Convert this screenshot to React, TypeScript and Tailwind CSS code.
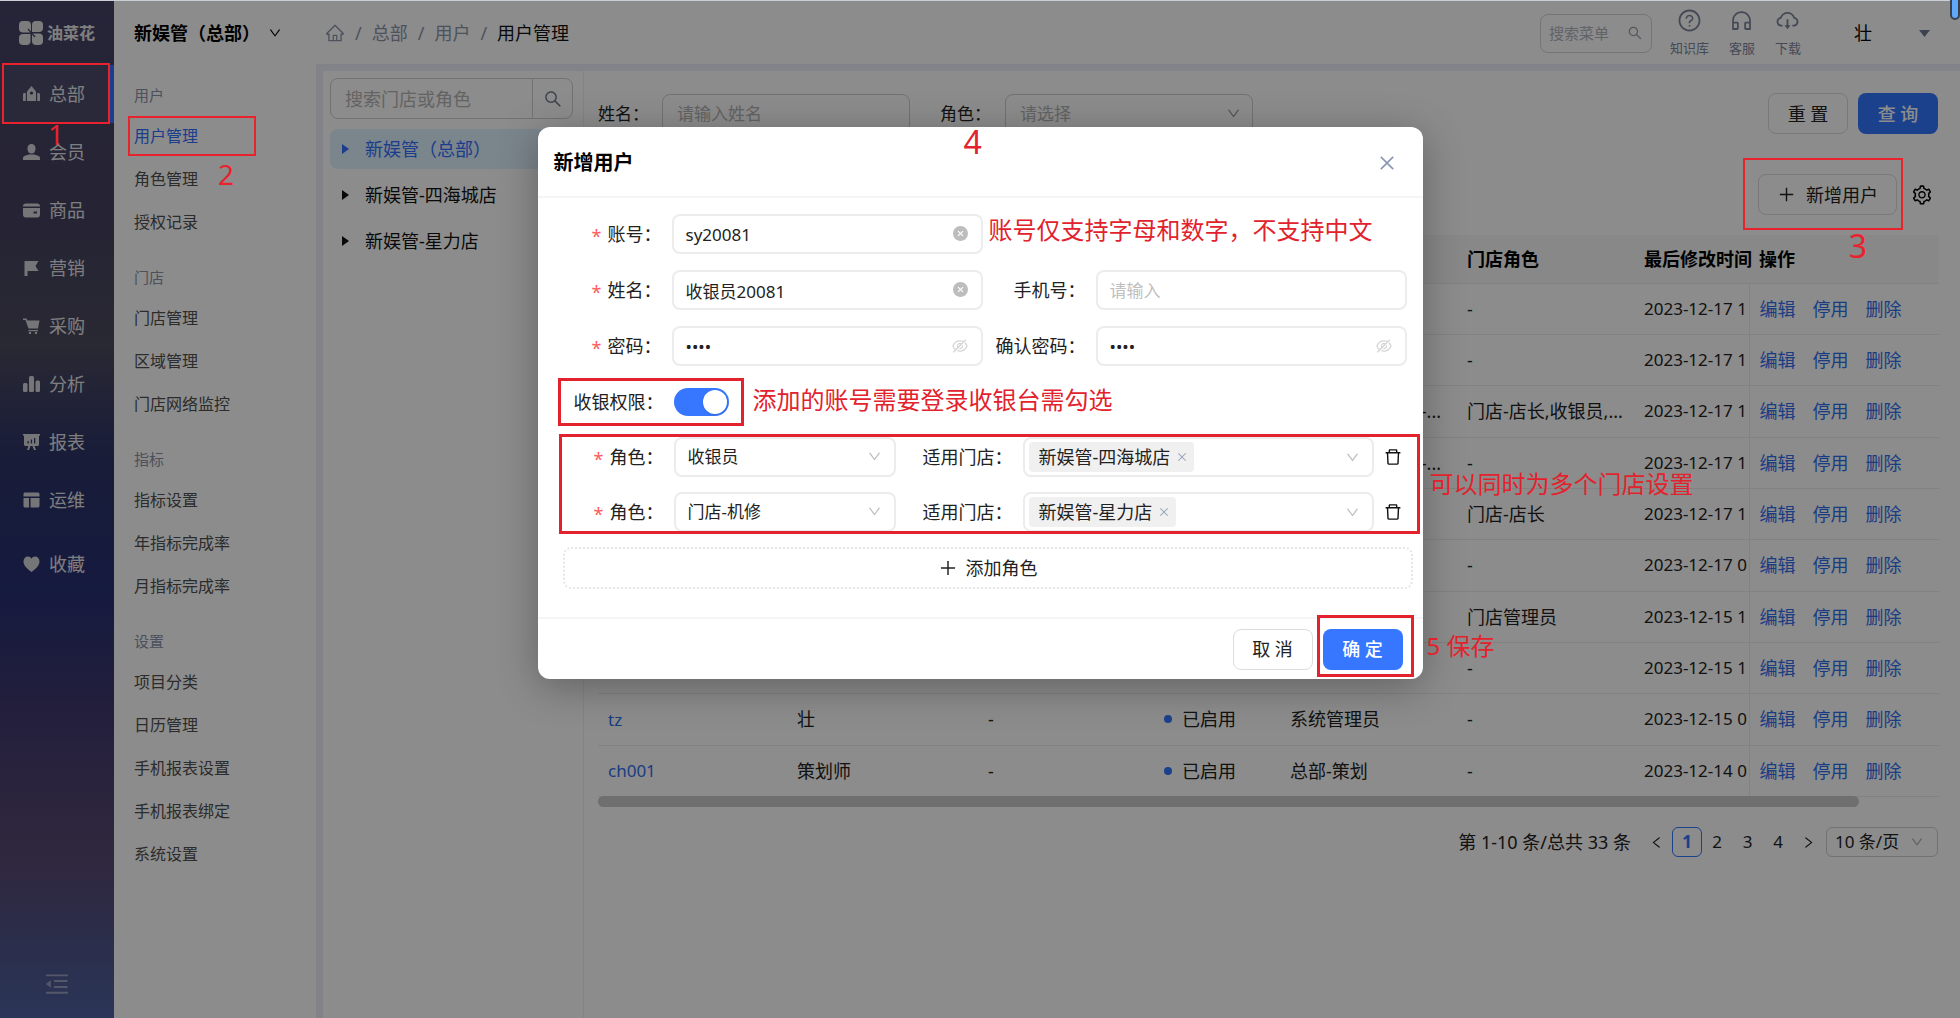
import { useState, type ReactNode } from "react";
import {
  AiFillCloseCircle,
  AiOutlineClose,
  AiOutlineCloudDownload,
  AiOutlineCustomerService,
  AiOutlineDelete,
  AiOutlineDown,
  AiOutlineEyeInvisible,
  AiOutlineHome,
  AiOutlineLeft,
  AiOutlineMenuFold,
  AiOutlinePlus,
  AiOutlineQuestionCircle,
  AiOutlineRight,
  AiOutlineSearch,
  AiOutlineSetting,
} from "react-icons/ai";

const navItems: { label: string; icon: ReactNode }[] = [
  {
    label: "总部",
    icon: (
      <>
        <path d="M4 15V5.500L8.500 0 13 5.500V15H4z" />
        <path d="M0 15V8.500C0 7.400 1 7 2.800 7v8H0zM14.200 15V7c1.800 0 2.800.4 2.800 1.500V15h-2.800z" />
        <circle cx="8.500" cy="7" r="1.600" fill="#3d3b5c" />
      </>
    ),
  },
  {
    label: "会员",
    icon: (
      <>
        <path d="M4.500 4.500C4.500 1.500 6 0 8.500 0s4 1.500 4 4.500-1.500 5-4 5-4-2-4-5z" />
        <path d="M0 16v-2c0-2 2-2.500 6-3.500h5c4 1 6 1.500 6 3.500v2H0z" />
      </>
    ),
  },
  {
    label: "商品",
    icon: (
      <>
        <path d="M0 4.500C0 2.500 1 1.500 3 1.500h11c2 0 3 1 3 3H0z" />
        <path fillRule="evenodd" d="M0 6h17v6.500c0 2-1 3-3 3H3c-2 0-3-1-3-3V6zm10.500 3.500v2H14v-2h-3.500z" />
      </>
    ),
  },
  { label: "营销", icon: <path d="M1.500 1h14l-3 5 3 5h-11v5h-3V1z" /> },
  {
    label: "采购",
    icon: (
      <>
        <path d="M0 .5h3.500L4.500 2.500H16.500L15 10.500H5.500L2.500 2H0V.5z" />
        <path d="M5.500 12H15v1.200H5.500z" />
        <circle cx="7" cy="15" r="1.200" />
        <circle cx="13" cy="15" r="1.200" />
      </>
    ),
  },
  {
    label: "分析",
    icon: (
      <>
        <rect x="0" y="7" width="4.500" height="9" rx="1.500" />
        <rect x="6" y="0" width="5" height="16" rx="1.500" />
        <rect x="12.500" y="4.500" width="4.500" height="11.500" rx="1.500" />
      </>
    ),
  },
  {
    label: "报表",
    icon: (
      <>
        <path d="M0 0h17v1.600H0z" />
        <path fillRule="evenodd" d="M1 1h15v9c0 1.500-.5 2-2 2H3c-1.500 0-2-.5-2-2V1zm3.500 6v2.500h1.300V7H4.500zm3.300-1.500v4h1.300v-4H7.800zM11 4v5.500h1.300V4H11z" />
        <path d="M5.500 12h2L6 16H4zM9.500 12h2l1.500 4h-2z" />
      </>
    ),
  },
  {
    label: "运维",
    icon: (
      <>
        <path d="M.5 4.500V2.500C.5 1 1 .5 2.500.5h12c1.500 0 2 .5 2 2v2H.5z" />
        <path d="M.5 6H6v9.500H2.500c-1.500 0-2-.5-2-2V6zM7.500 6h9v7.500c0 1.500-.5 2-2 2h-7V6z" />
      </>
    ),
  },
  {
    label: "收藏",
    icon: <path d="M8.500 16C4 12.500.5 9.500.5 5.500.5 2.500 2.500.500 4.800.500c1.600 0 3 .8 3.700 2.200C9.200 1.300 10.600.5 12.200.5c2.300 0 4.300 2 4.300 5 0 4-3.500 7-8 10.500z" />,
  },
];

const menuGroups = [
  { title: "用户", items: ["用户管理", "角色管理", "授权记录"] },
  { title: "门店", items: ["门店管理", "区域管理", "门店网络监控"] },
  { title: "指标", items: ["指标设置", "年指标完成率", "月指标完成率"] },
  { title: "设置", items: ["项目分类", "日历管理", "手机报表设置", "手机报表绑定", "系统设置"] },
];

const treeNodes = ["新娱管（总部）", "新娱管-四海城店", "新娱管-星力店"];

interface UserRow {
  account?: string;
  name?: string;
  phone?: string;
  enabled?: boolean;
  role?: string;
  storeRole: string;
  updatedAt: string;
}

const rows: UserRow[] = [
  { storeRole: "-", updatedAt: "2023-12-17 1" },
  { storeRole: "-", updatedAt: "2023-12-17 1" },
  { role: "系统管理员,总部-...", storeRole: "门店-店长,收银员,...", updatedAt: "2023-12-17 1" },
  { role: "系统管理员,总部-...", storeRole: "-", updatedAt: "2023-12-17 1" },
  { storeRole: "门店-店长", updatedAt: "2023-12-17 1" },
  { storeRole: "-", updatedAt: "2023-12-17 0" },
  { storeRole: "门店管理员", updatedAt: "2023-12-15 1" },
  { storeRole: "-", updatedAt: "2023-12-15 1" },
  { account: "tz", name: "壮", phone: "-", enabled: true, role: "系统管理员", storeRole: "-", updatedAt: "2023-12-15 0" },
  { account: "ch001", name: "策划师", phone: "-", enabled: true, role: "总部-策划", storeRole: "-", updatedAt: "2023-12-14 0" },
];

const columns = [
  { title: "账号", width: "w-[189px]" },
  { title: "姓名", width: "w-[191px]" },
  { title: "手机", width: "w-[176px]" },
  { title: "状态", width: "w-[126px]" },
  { title: "总部角色", width: "w-[177px]" },
  { title: "门店角色", width: "w-[177px]" },
  { title: "最后修改时间", width: "w-[115px]" },
  { title: "操作", width: "w-[190px]" },
];

const inputBox =
  "h-10 w-full rounded-lg border-2 border-[#ececec] bg-white px-3 text-[17px] text-[#222] outline-none placeholder:text-[#bfbfbf]";
const plainButton =
  "h-[41px] w-20 rounded-lg border border-[#dcdcdc] bg-white text-lg leading-6 text-[#222]";

function Sidebar() {
  return (
    <aside className="flex w-[114px] shrink-0 flex-col bg-[linear-gradient(180deg,#464467_0%,#44415f_20%,#4b4a5e_34%,#2d3468_45%,#273073_58%,#40396e_70%,#584870_84%,#4f5388_92%,#4f62a0_100%)]">
      <div className="flex h-[65px] items-center gap-1 pl-[19px]">
        <svg className="size-6 shrink-0" viewBox="0 0 24 24" fill="#e2e2e4">
          <path d="M4 0h4a4 4 0 014 4v7.500H4A4 4 0 010 8V4a4 4 0 014-4z" />
          <path d="M17 0h3a4 4 0 014 4v3a4 4 0 01-4 4h-7V4a4 4 0 014-4z" />
          <path d="M4 13h7.500v7a4 4 0 01-4 4H4a4 4 0 01-4-4v-3a4 4 0 014-4z" />
          <path d="M13 12.500h7a4 4 0 014 4V20a4 4 0 01-4 4h-3a4 4 0 01-4-4v-7.500z" />
          <path d="M9 8l7 8" stroke="#464467" strokeWidth="1.200" />
        </svg>
        <span className="text-base font-bold text-[#e8e8ea]">油菜花</span>
      </div>
      <nav className="flex flex-1 flex-col">
        {navItems.map((item, i) => (
          <a
            key={item.label}
            href="#"
            className={`flex h-[58px] shrink-0 items-center gap-[9px] pl-[23px] text-lg text-[#e6e6ea] last:mt-1.5 ${
              i === 0 ? "border-r-4 border-[#3370ff] bg-white/5" : ""
            }`}
          >
            <svg className="h-4 w-[17px]" viewBox="0 0 17 16" fill="#d8d8dc">
              {item.icon}
            </svg>
            {item.label}
          </a>
        ))}
      </nav>
      <button aria-label="收起菜单" className="mb-5 flex justify-center text-[#9a9fc0]">
        <AiOutlineMenuFold size={28} />
      </button>
    </aside>
  );
}

function SideMenu() {
  return (
    <nav className="w-[202px] shrink-0 bg-white pl-5">
      <button className="flex h-[62px] w-full items-center gap-2 pt-1 text-lg font-bold text-black">
        新娱管（总部）
        <AiOutlineDown size={14} />
      </button>
      {menuGroups.map((group) => (
        <div key={group.title}>
          <div className="h-[53px] pt-[13px] text-[15px] leading-10 text-[#8a93a8]">{group.title}</div>
          {group.items.map((item) => (
            <a
              key={item}
              href="#"
              className={`block h-[43px] text-base leading-[43px] ${item === "用户管理" ? "text-[#3370ff]" : "text-[#505050]"}`}
            >
              {item}
            </a>
          ))}
        </div>
      ))}
    </nav>
  );
}

function TopBar() {
  const tools = [
    { label: "知识库", icon: <AiOutlineQuestionCircle size={25} /> },
    { label: "客服", icon: <AiOutlineCustomerService size={25} /> },
    { label: "下载", icon: <AiOutlineCloudDownload size={25} /> },
  ];
  return (
    <header className="flex h-16 items-center bg-white pt-0.5 pr-[30px] pl-[9px]">
      <ol className="flex items-center gap-2.5 text-lg text-[#8d96aa]">
        <li>
          <AiOutlineHome size={20} />
        </li>
        <li>/</li>
        <li>总部</li>
        <li>/</li>
        <li>用户</li>
        <li>/</li>
        <li className="text-[#111]">用户管理</li>
      </ol>
      <label className="ml-auto flex h-[39px] w-28 items-center rounded-lg border border-[#d6d6d6] pr-2 pl-2">
        <input className="w-full min-w-0 text-[15px] outline-none placeholder:text-[#b0b4bd]" placeholder="搜索菜单" aria-label="搜索菜单" />
        <AiOutlineSearch size={16} className="shrink-0 text-[#9aa0ad]" />
      </label>
      <div className="ml-[18px] flex gap-5">
        {tools.map((tool) => (
          <button key={tool.label} className="flex flex-col items-center gap-[5px] text-[13px] leading-5 text-[#7d879c]">
            {tool.icon}
            {tool.label}
          </button>
        ))}
      </div>
      <button className="ml-[53px] flex w-[76px] items-center justify-between text-lg text-black">
        壮
        <svg width="11" height="7" viewBox="0 0 11 7" fill="#6d7890">
          <path d="M0 0h11L5.500 7z" />
        </svg>
      </button>
    </header>
  );
}

function StoreTree() {
  return (
    <section className="w-[261px] shrink-0 border-r border-[#f0f0f0] pt-[7px] pr-2.5 pl-[7px]">
      <div className="flex h-[41px] rounded-lg border border-[#cfcfcf]">
        <input className="min-w-0 flex-1 px-3.5 text-lg outline-none placeholder:text-[#b5b5b5]" placeholder="搜索门店或角色" aria-label="搜索门店或角色" />
        <button aria-label="搜索" className="flex w-10 items-center justify-center border-l border-[#cfcfcf] text-[#6f7a8f]">
          <AiOutlineSearch size={20} />
        </button>
      </div>
      <ul className="mt-2.5 flex flex-col gap-1.5 text-lg">
        {treeNodes.map((node, i) => (
          <li
            key={node}
            className={`flex h-10 items-center gap-4 rounded-lg pl-3 ${i === 0 ? "bg-[#e1f2ff] text-[#3370ff]" : "text-[#111]"}`}
          >
            <svg width="7" height="10" viewBox="0 0 7 10" fill="currentColor">
              <path d="M0 0l7 5-7 5z" />
            </svg>
            {node}
          </li>
        ))}
      </ul>
    </section>
  );
}

function UserList() {
  const cell = "truncate border-b border-[#ededed] pl-2.5";
  return (
    <section className="min-w-0 flex-1 pt-[22px] pr-[22px] pl-3.5">
      <div className="flex h-[41px] items-center text-[17px] text-[#222]">
        <label htmlFor="q-name" className="w-16 shrink-0">姓名：</label>
        <input id="q-name" className="h-10 w-[248px] rounded-lg border border-[#cfcfcf] px-3.5 outline-none placeholder:text-[#b5b5b5]" placeholder="请输入姓名" />
        <label htmlFor="q-role" className="ml-[30px] w-[65px] shrink-0">角色：</label>
        <div className="relative w-[248px]">
          <select id="q-role" className="h-10 w-full appearance-none rounded-lg border border-[#cfcfcf] px-3.5 text-[#b5b5b5] outline-none">
            <option>请选择</option>
          </select>
          <AiOutlineDown size={15} className="pointer-events-none absolute top-3 right-3 text-[#9a9a9a]" />
        </div>
        <button className={`${plainButton} ml-auto`}>重 置</button>
        <button className="ml-2.5 h-[41px] w-20 rounded-lg bg-[#3377ff] text-lg font-medium text-white">查 询</button>
      </div>
      <div className="mt-10 flex items-center justify-end gap-3.5 pr-[5px]">
        <button className="flex h-[41px] w-[139px] items-center justify-center gap-2.5 rounded-lg border border-[#dcdcdc] bg-white text-lg text-[#222]">
          <AiOutlinePlus size={19} />
          新增用户
        </button>
        <button aria-label="列设置" className="text-black">
          <AiOutlineSetting size={22} />
        </button>
      </div>
      <table className="mt-5 h-[562px] w-full table-fixed text-left text-lg leading-6 text-[#222]">
        <thead>
          <tr className="h-12 bg-[#f8f8f8] text-black">
            {columns.map((col) => (
              <th key={col.title} className={`${col.width} border-b border-[#ededed] pl-2.5 font-bold whitespace-nowrap`}>
                {col.title}
              </th>
            ))}
          </tr>
        </thead>
        <tbody>
          {rows.map((row, i) => (
            <tr key={i} className="h-[51px]">
              <td className={cell}>
                {row.account && <a href="#" className="text-[17px] text-[#2f70ee]">{row.account}</a>}
              </td>
              <td className={cell}>{row.name}</td>
              <td className={cell}>{row.phone}</td>
              <td className={cell}>
                {row.enabled && (
                  <span className="flex items-center gap-2.5">
                    <i className="size-2 rounded-full bg-[#3377ff]" />
                    已启用
                  </span>
                )}
              </td>
              <td className={cell}>{row.role}</td>
              <td className={cell}>{row.storeRole}</td>
              <td className="border-r border-b border-[#ededed] pl-2.5 text-[17px] whitespace-nowrap">{row.updatedAt}</td>
              <td className="border-b border-[#ededed] pl-2.5">
                <div className="flex gap-[17px] text-[#2f70ee]">
                  <a href="#">编辑</a>
                  <a href="#">停用</a>
                  <a href="#">删除</a>
                </div>
              </td>
            </tr>
          ))}
        </tbody>
      </table>
      <div className="-mt-px mr-[79px] h-[11px] rounded-full bg-[#cacaca]" />
      <div className="mt-5 flex h-[30px] items-center justify-end text-[17px] text-[#222]">
        <span className="mr-[18px] text-lg">第 1-10 条/总共 33 条</span>
        <button aria-label="上一页" className="mr-2">
          <AiOutlineLeft size={15} />
        </button>
        <button className="size-[30px] rounded-md border border-[#3377ff] font-bold leading-6 text-[#3377ff]">1</button>
        <button className="w-[30px]">2</button>
        <button className="w-[31px]">3</button>
        <button className="w-[30px]">4</button>
        <button aria-label="下一页" className="mr-2.5 ml-2">
          <AiOutlineRight size={15} />
        </button>
        <div className="relative w-28">
          <select aria-label="每页条数" className="h-[30px] w-full appearance-none rounded-md border border-[#cfcfcf] pl-2 outline-none">
            <option>10 条/页</option>
          </select>
          <AiOutlineDown size={14} className="pointer-events-none absolute top-2 right-3.5 text-[#aaa]" />
        </div>
      </div>
    </section>
  );
}

function FieldLabel({ htmlFor, required, children }: { htmlFor: string; required?: boolean; children: ReactNode }) {
  return (
    <label htmlFor={htmlFor} className="flex items-center justify-end gap-1.5 pr-2.5 text-lg text-[#222]">
      {required && <span className="pt-1 text-lg leading-6 text-[#ff5a5a]">*</span>}
      {children}
    </label>
  );
}

function TextField({ id, value, password, placeholder }: { id: string; value?: string; password?: boolean; placeholder?: string }) {
  return (
    <div className="relative">
      <input
        id={id}
        type={password ? "password" : "text"}
        defaultValue={value}
        placeholder={placeholder}
        autoComplete="off"
        className={inputBox}
      />
      {value && (
        <button aria-label={password ? "显示密码" : "清空"} className="absolute top-[11px] right-3.5 text-[#bdbdbd]">
          {password ? <AiOutlineEyeInvisible size={18} className="text-[#d6d6d6]" /> : <AiFillCloseCircle size={17} />}
        </button>
      )}
    </div>
  );
}

function RoleRow({ index, role, store }: { index: number; role: string; store: string }) {
  return (
    <div className="grid grid-cols-[120px_222px_127px_1fr_39px] items-center">
      <FieldLabel htmlFor={`role-${index}`} required>角色：</FieldLabel>
      <div className="relative">
        <select id={`role-${index}`} className={`${inputBox} appearance-none`}>
          <option>{role}</option>
        </select>
        <AiOutlineDown size={15} className="pointer-events-none absolute top-3 right-3.5 text-[#bdbdbd]" />
      </div>
      <FieldLabel htmlFor={`store-${index}`}>适用门店：</FieldLabel>
      <div id={`store-${index}`} role="combobox" aria-expanded="false" className="flex h-10 items-center rounded-lg border-2 border-[#ececec] pr-3 pl-1">
        <span className="flex h-[30px] items-center gap-1.5 rounded bg-[#f0f0f0] pr-1.5 pl-2.5 text-lg text-[#222]">
          {store}
          <button aria-label={`移除${store}`} className="text-[#9aa6bd]">
            <AiOutlineClose size={12} />
          </button>
        </span>
        <AiOutlineDown size={15} className="ml-auto text-[#bdbdbd]" />
      </div>
      <button aria-label="删除角色" className="flex justify-center text-[#111]">
        <AiOutlineDelete size={20} />
      </button>
    </div>
  );
}

function CreateUserDialog() {
  const [cashier, setCashier] = useState(true);

  return (
    <div role="dialog" aria-label="新增用户" className="relative h-fit w-[885px] rounded-xl bg-white shadow-[0_8px_40px_rgba(0,0,0,0.3)]">
      <div className="flex h-[71px] items-center justify-between border-b-2 border-[#f5f5f5] pt-0.5 pr-[26px] pl-4">
        <h2 className="text-xl font-bold text-black">新增用户</h2>
        <button aria-label="关闭" className="text-[#8797b2]">
          <AiOutlineClose size={20} />
        </button>
      </div>
      <form className="pt-4 pr-2.5 pl-4" onSubmit={(e) => e.preventDefault()}>
        <div className="grid grid-cols-[118px_1fr_113px_1fr] gap-y-4 pr-1.5">
          <FieldLabel htmlFor="account" required>账号：</FieldLabel>
          <TextField id="account" value="sy20081" />
          <span className="col-span-2" />
          <FieldLabel htmlFor="name" required>姓名：</FieldLabel>
          <TextField id="name" value="收银员20081" />
          <FieldLabel htmlFor="phone">手机号：</FieldLabel>
          <TextField id="phone" placeholder="请输入" />
          <FieldLabel htmlFor="password" required>密码：</FieldLabel>
          <TextField id="password" value="1234" password />
          <FieldLabel htmlFor="confirm">确认密码：</FieldLabel>
          <TextField id="confirm" value="1234" password />
        </div>
        <div className="mt-4 grid h-10 grid-cols-[120px_1fr] items-center">
          <FieldLabel htmlFor="cashier">收银权限：</FieldLabel>
          <label className="flex h-7 w-[55px] items-center rounded-full bg-[#bfbfbf] p-0.5 has-checked:justify-end has-checked:bg-[#3777ff]">
            <input id="cashier" type="checkbox" role="switch" checked={cashier} onChange={(e) => setCashier(e.target.checked)} className="sr-only" />
            <span className="size-6 rounded-full bg-white shadow" />
          </label>
        </div>
        <div className="mt-[15px] flex flex-col gap-[15px]">
          <RoleRow index={1} role="收银员" store="新娱管-四海城店" />
          <RoleRow index={2} role="门店-机修" store="新娱管-星力店" />
        </div>
        <div className="pt-[15px] pl-[9px]">
          <button className="flex h-[42px] w-full items-center justify-center gap-2 rounded-lg border-2 border-dotted border-[#e6e6e6] text-lg text-[#222]">
            <AiOutlinePlus size={20} />
            添加角色
          </button>
        </div>
      </form>
      <div className="mt-7 flex h-[62px] items-center justify-end gap-2.5 border-t-2 border-[#f5f5f5] pr-5">
        <button className={plainButton}>取 消</button>
        <button className="h-[41px] w-20 rounded-lg bg-[#3777ff] text-lg font-medium text-white">确 定</button>
      </div>

      {/* guide marks pinned to the dialog */}
      <div className="pointer-events-none absolute inset-0 text-2xl leading-8 whitespace-nowrap text-[#e2222c]">
        <span className="absolute top-[-5px] left-[426px] text-[32px] leading-10">4</span>
        <span className="absolute top-[87px] left-[451px]">账号仅支持字母和数字，不支持中文</span>
        <div className="absolute top-[251px] left-5 h-12 w-[186px] border-3" />
        <span className="absolute top-[257px] left-[215px]">添加的账号需要登录收银台需勾选</span>
        <div className="absolute top-[307px] left-[21px] h-[100px] w-[861px] border-3" />
        <span className="absolute top-[341px] left-[892px]">可以同时为多个门店设置</span>
        <div className="absolute top-[488px] left-[779px] h-[62px] w-[97px] border-3" />
        <span className="absolute top-[503px] left-[889px]">5 保存</span>
      </div>
    </div>
  );
}

export default function App() {
  return (
    <div className="relative min-h-screen overflow-hidden bg-white font-['Noto_Sans','Noto_Sans_CJK_SC',sans-serif]">
      <div className="flex min-h-screen">
        <Sidebar />
        <SideMenu />
        <div className="flex min-w-0 flex-1 flex-col">
          <TopBar />
          <main className="flex min-w-0 flex-1 border-t-7 border-l-7 border-[#edeefa]">
            <StoreTree />
            <UserList />
          </main>
        </div>
      </div>

      <div className="absolute inset-0 flex justify-center bg-black/45 pt-[127px]">
        <CreateUserDialog />
      </div>

      {/* guide marks over the page */}
      <div className="pointer-events-none absolute inset-0 border-t border-[#c9cfd4]">
        <div className="absolute inset-0 text-[28px] leading-8 text-[#e8232d]">
          <div className="absolute top-[62px] left-0.5 h-[61px] w-[108px] border-2" />
          <span className="absolute top-[117px] left-12">1</span>
          <div className="absolute top-[115px] left-32 h-10 w-32 border-2" />
          <span className="absolute top-[157px] left-[218px]">2</span>
          <div className="absolute top-[157px] right-[57px] h-[72px] w-40 border-2" />
          <span className="absolute top-[229px] right-[93px] text-[32px]">3</span>
        </div>
        <div className="absolute -top-1 right-0 h-[23px] w-2.5 rounded-b-md border-2 border-[#3a3f4a] bg-[#5fa8fa]" />
      </div>
    </div>
  );
}
